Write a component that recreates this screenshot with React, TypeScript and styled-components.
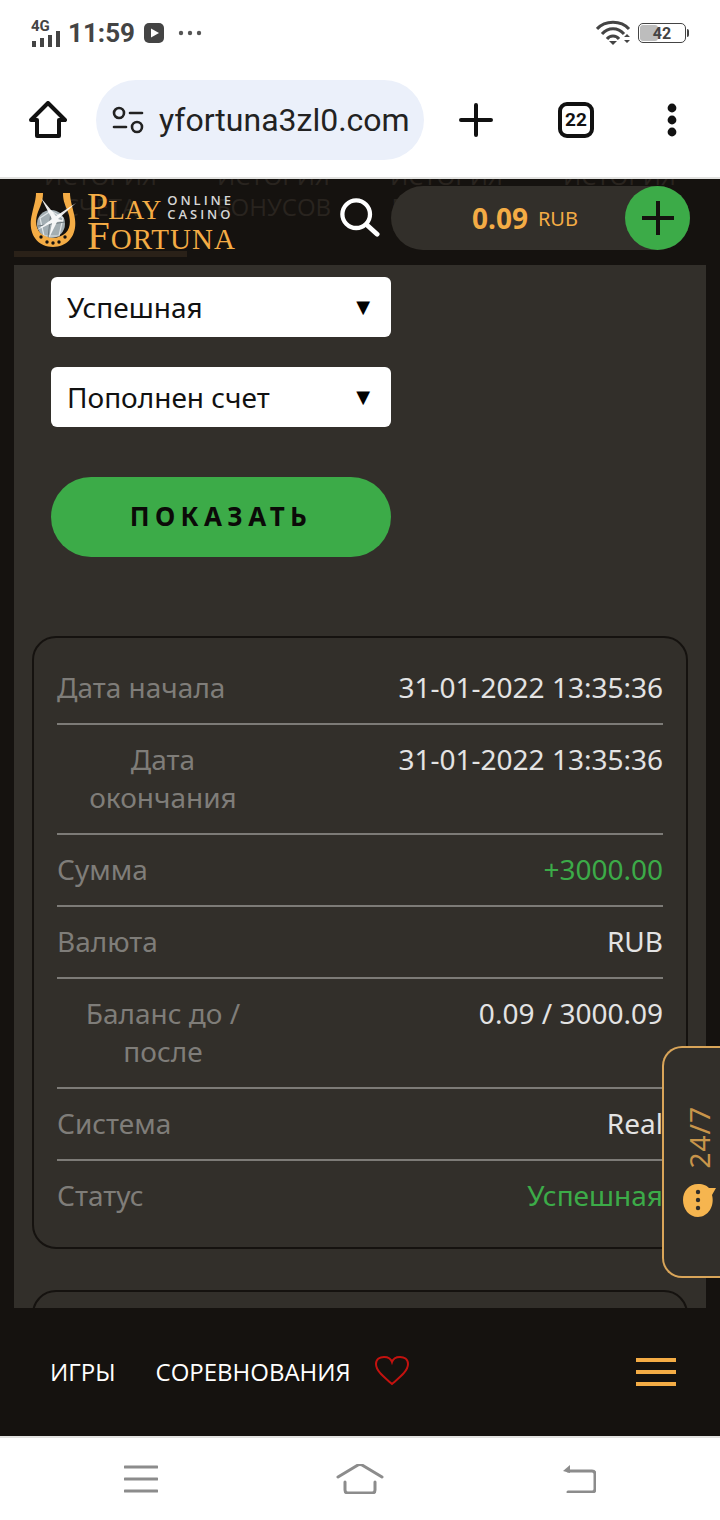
import * as React from 'react'
import styled, { createGlobalStyle } from 'styled-components'

const rows = [
  { label: 'Дата начала', value: '31-01-2022 13:35:36' },
  { label: 'Дата окончания', value: '31-01-2022 13:35:36', wrapped: true },
  { label: 'Сумма', value: '+3000.00', green: true },
  { label: 'Валюта', value: 'RUB' },
  { label: 'Баланс до / после', value: '0.09 / 3000.09', wrapped: true },
  { label: 'Система', value: 'Real' },
  { label: 'Статус', value: 'Успешная', green: true },
]

const tabs = [
  ['ИСТОРИЯ', 'СЧЕТА'],
  ['ИСТОРИЯ', 'БОНУСОВ'],
  ['ИСТОРИЯ', 'БАЛАНСА'],
  ['ИСТОРИЯ', 'ИГР'],
]

export default () => {
  return (
    <Screen>
      <GlobalStyle />
      <StatusBar>
        <StatusGroup>
          <SignalIcon />
          <Time>11:59</Time>
          <PlayIcon />
          <DotsIcon />
        </StatusGroup>
        <StatusGroup>
          <WifiIcon />
          <Battery>
            <BatteryFill />
            <BatteryText>42</BatteryText>
          </Battery>
          <BatteryTip />
        </StatusGroup>
      </StatusBar>

      <BrowserBar>
        <HomeIcon />
        <UrlPill>
          <TuneIcon />
          <UrlText>yfortuna3zl0.com</UrlText>
        </UrlPill>
        <PlusIcon />
        <TabCount>22</TabCount>
        <MoreIcon />
      </BrowserBar>

      <Page>
        <Header>
          <TabsBehind>
            {tabs.map((tab, i) => (
              <TabBehind key={i}>
                {tab[0]}
                <br />
                {tab[1]}
              </TabBehind>
            ))}
          </TabsBehind>
          <ActiveLine />
          <Logo>
            <HorseshoeIcon />
            <LogoWords>
              <LogoTop>
                <LogoName $size={38}>Play</LogoName>
                <LogoSmall>
                  ONLINE
                  <br />
                  CASINO
                </LogoSmall>
              </LogoTop>
              <LogoName $size={41} $spacing={1}>
                Fortuna
              </LogoName>
            </LogoWords>
          </Logo>
          <SearchIcon />
          <BalancePill>
            <BalanceAmount>0.09</BalanceAmount>
            <BalanceCurrency>RUB</BalanceCurrency>
            <AddButton>
              <AddIcon />
            </AddButton>
          </BalancePill>
        </Header>

        <Content>
          <Panel>
            <Filters>
              <Select>
                Успешная
                <SelectArrow>▼</SelectArrow>
              </Select>
              <Select>
                Пополнен счет
                <SelectArrow>▼</SelectArrow>
              </Select>
              <ShowButton>ПОКАЗАТЬ</ShowButton>
            </Filters>
            <Card>
              {rows.map((row) => (
                <Row key={row.label}>
                  <Label $wrapped={row.wrapped}>{row.label}</Label>
                  <Value $green={row.green}>{row.value}</Value>
                </Row>
              ))}
            </Card>
            <NextCard />
          </Panel>
          <SupportTab>
            <SupportText>24/7</SupportText>
            <BubbleIcon />
          </SupportTab>
        </Content>

        <BottomNav>
          <NavLink>ИГРЫ</NavLink>
          <NavLink>СОРЕВНОВАНИЯ</NavLink>
          <HeartIcon />
          <Burger>
            <BurgerBar />
            <BurgerBar />
            <BurgerBar />
          </Burger>
        </BottomNav>
      </Page>

      <SystemNav>
        <SysMenuIcon />
        <SysHomeIcon />
        <SysBackIcon />
      </SystemNav>
    </Screen>
  )
}

const SignalIcon = () => (
  <svg width="32" height="30" viewBox="0 0 32 30" style={{ marginRight: 6, flexShrink: 0 }}>
    <text x="1" y="13" fontFamily="Roboto" fontWeight="700" fontSize="15" fill="#444">
      4G
    </text>
    <rect x="2" y="23" width="4" height="6" fill="#444" />
    <rect x="10" y="20" width="4" height="9" fill="#444" />
    <rect x="18" y="17" width="4" height="12" fill="#444" />
    <rect x="26" y="13" width="4" height="16" fill="#444" />
  </svg>
)

const PlayIcon = () => (
  <svg width="20" height="20" viewBox="0 0 20 20" style={{ marginLeft: 9 }}>
    <rect width="20" height="20" rx="5" fill="#444" />
    <path d="M7 5.5 L15 10 L7 14.5 Z" fill="#fff" />
  </svg>
)

const DotsIcon = () => (
  <svg width="24" height="6" viewBox="0 0 24 6" style={{ marginLeft: 14 }}>
    <circle cx="3" cy="3" r="2.2" fill="#555" />
    <circle cx="12" cy="3" r="2.2" fill="#555" />
    <circle cx="21" cy="3" r="2.2" fill="#555" />
  </svg>
)

const WifiIcon = () => (
  <svg width="36" height="26" viewBox="0 0 36 26" style={{ marginRight: 6 }}>
    <g fill="none" stroke="#444" strokeWidth="3">
      <path d="M1 9 C9 0 25 0 33 9" />
      <path d="M6 14 C12 7 22 7 28 14" />
      <path d="M11 19 C14 15 20 15 23 19" />
    </g>
    <path d="M13 21 L21 21 L17 25 Z" fill="#444" />
    <path d="M28 17 L31 14 L34 17 Z M28 20 L34 20 L31 23 Z" fill="#444" />
  </svg>
)

const HomeIcon = () => (
  <svg width="38" height="38" viewBox="0 0 38 38">
    <path
      d="M2 19 L19 2 L36 19 L30 19 L30 35 L8 35 L8 19 Z"
      fill="none"
      stroke="#111"
      strokeWidth="4"
      strokeLinejoin="round"
    />
  </svg>
)

const TuneIcon = () => (
  <svg width="32" height="28" viewBox="0 0 32 28">
    <g fill="none" stroke="#222" strokeWidth="2.6" strokeLinecap="round">
      <circle cx="7" cy="7" r="5" />
      <path d="M18 7 H30" />
      <path d="M2 21 H14" />
      <circle cx="25" cy="21" r="5" />
    </g>
  </svg>
)

const PlusIcon = () => (
  <svg width="34" height="34" viewBox="0 0 34 34">
    <path d="M17 2 V32 M2 17 H32" stroke="#111" strokeWidth="4" strokeLinecap="round" />
  </svg>
)

const MoreIcon = () => (
  <svg width="12" height="34" viewBox="0 0 12 34">
    <circle cx="6" cy="5" r="4.4" fill="#111" />
    <circle cx="6" cy="17" r="4.4" fill="#111" />
    <circle cx="6" cy="29" r="4.4" fill="#111" />
  </svg>
)

const HorseshoeIcon = () => (
  <svg width="48" height="56" viewBox="0 0 48 56" style={{ flexShrink: 0 }}>
    <circle cx="22" cy="32" r="14" fill="#a3aeb3" />
    <path d="M11 26 L22 19 L34 26 L30 44 L15 44 Z" fill="none" stroke="#dfe4e6" strokeWidth="1.2" />
    <path d="M22 19 L19 46 M9 34 L36 30" stroke="#6d787d" strokeWidth="1" />
    <path
      d="M7 1 H14 C14 7 13 11 9 20 C4 34 9 45 24 46 C39 45 44 34 39 20 C35 11 34 7 34 1 H41 C41 7 43 13 45 22 C50 41 40 55 24 55 C8 55 -2 41 3 22 C5 13 7 7 7 1 Z"
      fill="#f4ac45"
    />
    <g fill="#15120f">
      <circle cx="12" cy="45" r="1.7" />
      <circle cx="18" cy="50" r="1.7" />
      <circle cx="24" cy="51" r="1.7" />
      <circle cx="30" cy="50" r="1.7" />
      <circle cx="36" cy="45" r="1.7" />
    </g>
    <path
      d="M12 6 L27 24 L47 11 L29 27 L35 29 L28 30 L20 46 L23 31 L8 38 L23 27 Z"
      fill="#fff"
      opacity="0.9"
    />
  </svg>
)

const SearchIcon = () => (
  <svg width="40" height="40" viewBox="0 0 42 42" style={{ flexShrink: 0, marginTop: 12 }}>
    <circle cx="17" cy="17" r="14.5" fill="none" stroke="#fff" strokeWidth="4.5" />
    <path d="M28 28 L39 38" stroke="#fff" strokeWidth="5" strokeLinecap="round" />
  </svg>
)

const AddIcon = () => (
  <svg width="32" height="34" viewBox="0 0 32 34">
    <path d="M16 0 V34 M0 17 H32" stroke="#15120f" strokeWidth="4" />
  </svg>
)

const BubbleIcon = () => (
  <svg width="33" height="33" viewBox="0 0 33 33" style={{ marginTop: 16, flexShrink: 0 }}>
    <path
      d="M15 0 C21 0 24 2 26 4 L33 4 L29 11 C32 22 25 33 15 33 C6 33 0 25 0 16 C0 7 6 0 15 0 Z"
      fill="#f6b54f"
    />
    <g fill="#322f2a">
      <circle cx="15" cy="8" r="2.2" />
      <circle cx="15" cy="16" r="2.2" />
      <circle cx="15" cy="24" r="2.2" />
    </g>
  </svg>
)

const HeartIcon = () => (
  <svg width="36" height="30" viewBox="0 0 36 30" style={{ marginLeft: -17 }}>
    <path
      d="M18 28 C10 21 2 15 2 8 C2 3 6 1 10 1 C14 1 17 3 18 6 C19 3 22 1 26 1 C30 1 34 3 34 8 C34 15 26 21 18 28 Z"
      fill="none"
      stroke="#c4120f"
      strokeWidth="2"
    />
  </svg>
)

const SysMenuIcon = () => (
  <svg width="34" height="28" viewBox="0 0 34 28">
    <path d="M1 2 H33 M1 14 H33 M1 26 H33" stroke="#8c8c8c" strokeWidth="3" strokeLinecap="round" />
  </svg>
)

const SysHomeIcon = () => (
  <svg width="48" height="30" viewBox="0 0 48 30">
    <path
      d="M2 13 L22 1 Q24 0 26 1 L46 13 M9 18 V26 Q9 29 12 29 H36 Q39 29 39 26 V18"
      fill="none"
      stroke="#8c8c8c"
      strokeWidth="3"
      strokeLinecap="round"
    />
  </svg>
)

const SysBackIcon = () => (
  <svg width="34" height="28" viewBox="0 0 34 28">
    <path
      d="M6 6 H30 Q33 6 33 9 V24 Q33 27 30 27 H6"
      fill="none"
      stroke="#8c8c8c"
      strokeWidth="3"
      strokeLinecap="round"
    />
    <path d="M8 0 V8 L1 6 Z" fill="#8c8c8c" />
  </svg>
)

const GlobalStyle = createGlobalStyle`
  html, body {
    margin: 0;
    padding: 0;
    background: #fff;
  }
`

const Screen = styled.div`
  display: flex;
  flex-direction: column;
  width: 720px;
  height: 1520px;
  overflow: hidden;
  background: #fff;
  font-family: 'Noto Sans', sans-serif;
`

const StatusBar = styled.div`
  display: flex;
  justify-content: space-between;
  align-items: center;
  height: 62px;
  padding: 4px 31px 0 30px;
  box-sizing: border-box;
`

const StatusGroup = styled.div`
  display: flex;
  align-items: center;
`

const Time = styled.span`
  font-family: Roboto, sans-serif;
  font-size: 26px;
  font-weight: 700;
  color: #444;
`

const Battery = styled.div`
  position: relative;
  width: 46px;
  height: 18px;
  border: 1.5px solid #444;
  border-radius: 5px;
  display: flex;
  align-items: center;
  justify-content: center;
  overflow: hidden;
`

const BatteryFill = styled.div`
  position: absolute;
  left: 1px;
  top: 1px;
  bottom: 1px;
  width: 40%;
  background: #bdbdbd;
  border-radius: 3px;
`

const BatteryText = styled.span`
  position: relative;
  font-family: Roboto, sans-serif;
  font-size: 16px;
  font-weight: 700;
  color: #444;
`

const BatteryTip = styled.div`
  width: 2px;
  height: 8px;
  margin-left: 1px;
  border-radius: 0 2px 2px 0;
  background: #444;
`

const BrowserBar = styled.div`
  display: flex;
  align-items: center;
  flex-shrink: 0;
  height: 117px;
  padding: 0 0 0 29px;
  box-sizing: border-box;
  border-bottom: 2px solid #e2e2e0;
`

const UrlPill = styled.div`
  display: flex;
  align-items: center;
  gap: 15px;
  width: 328px;
  height: 80px;
  margin: 0 35px 0 29px;
  padding-left: 16px;
  box-sizing: border-box;
  border-radius: 40px;
  background: #ebf0fa;
`

const UrlText = styled.span`
  font-family: Roboto, sans-serif;
  font-size: 32px;
  color: #222;
  white-space: nowrap;
`

const TabCount = styled.div`
  display: flex;
  align-items: center;
  justify-content: center;
  width: 36px;
  height: 36px;
  margin: 0 72px 0 65px;
  box-sizing: border-box;
  border: 4px solid #111;
  border-radius: 9px;
  font-family: Roboto, sans-serif;
  font-size: 19px;
  font-weight: 700;
  color: #111;
`

const Page = styled.div`
  display: flex;
  flex-direction: column;
  flex: 1;
  min-height: 0;
  background: #15120f;
`

const Header = styled.div`
  position: relative;
  display: flex;
  align-items: flex-start;
  flex-shrink: 0;
  height: 86px;
  padding: 7px 30px 0 29px;
  box-sizing: border-box;
  overflow: hidden;
  background: #15120f;
`

const TabsBehind = styled.div`
  position: absolute;
  left: 14px;
  top: -19px;
  display: grid;
  grid-template-columns: repeat(4, 173px);
`

const TabBehind = styled.div`
  font-family: 'Open Sans', sans-serif;
  font-size: 24px;
  line-height: 31px;
  text-align: center;
  color: #29241f;
`

const ActiveLine = styled.div`
  position: absolute;
  left: 14px;
  top: 72px;
  width: 173px;
  height: 6px;
  background: #2a2118;
`

const Logo = styled.div`
  position: relative;
  display: flex;
  align-items: flex-start;
  width: 311px;
  gap: 10px;
  flex-shrink: 0;
  padding-top: 6px;
  box-sizing: border-box;
`

const LogoWords = styled.div`
  display: flex;
  flex-direction: column;
`

const LogoTop = styled.div`
  display: flex;
  align-items: center;
  gap: 6px;
  height: 29px;
`

const LogoName = styled.div<{ $size: number; $spacing?: number }>`
  font-family: 'Liberation Serif', serif;
  font-variant: small-caps;
  font-size: ${(p) => p.$size}px;
  letter-spacing: ${(p) => p.$spacing || 0}px;
  line-height: 29px;
  color: #f4ac45;
`

const LogoSmall = styled.div`
  font-family: 'Open Sans', sans-serif;
  font-size: 13px;
  font-weight: 600;
  line-height: 14px;
  letter-spacing: 3px;
  color: #d6d6d6;
`

const BalancePill = styled.div`
  position: absolute;
  left: 391px;
  top: 7px;
  display: flex;
  align-items: center;
  justify-content: flex-start;
  width: 299px;
  height: 64px;
  padding-left: 81px;
  box-sizing: border-box;
  border-radius: 32px;
  background: #322f2a;
`

const BalanceAmount = styled.span`
  font-size: 28px;
  font-weight: 700;
  color: #f4ac45;
`

const BalanceCurrency = styled.span`
  margin-left: 10px;
  font-size: 20px;
  color: #f4ac45;
`

const AddButton = styled.div`
  display: flex;
  align-items: center;
  justify-content: center;
  width: 65px;
  height: 64px;
  margin-left: auto;
  border-radius: 50%;
  background: #3cab48;
`

const Content = styled.div`
  position: relative;
  flex: 1;
  min-height: 0;
  overflow: hidden;
`

const Panel = styled.div`
  margin: 0 14px;
  padding: 12px 18px 0;
  background: #322f2a;
`

const Filters = styled.div`
  display: flex;
  flex-direction: column;
  align-items: flex-start;
  padding-left: 19px;
`

const Select = styled.div`
  display: flex;
  align-items: center;
  justify-content: space-between;
  width: 340px;
  height: 60px;
  margin-bottom: 30px;
  padding: 0 18px 1px 16px;
  box-sizing: border-box;
  border-radius: 6px;
  background: #fff;
  font-size: 28px;
  color: #111;
`

const SelectArrow = styled.span`
  font-family: 'DejaVu Sans', sans-serif;
  font-size: 18px;
  margin-right: 3px;
  color: #000;
`

const ShowButton = styled.div`
  display: flex;
  align-items: center;
  justify-content: center;
  width: 340px;
  height: 80px;
  margin-top: 20px;
  padding-bottom: 2px;
  box-sizing: border-box;
  border-radius: 40px;
  background: #3cab48;
  font-size: 26px;
  font-weight: 700;
  letter-spacing: 5.4px;
  color: #0b0a08;
`

const Card = styled.div`
  margin-top: 79px;
  padding: 15px 23px 16px;
  border: 2px solid #15120f;
  border-radius: 24px;
`

const Row = styled.div`
  display: flex;
  justify-content: space-between;
  align-items: flex-start;
  padding: 15px 0 17px;
  border-bottom: 2px solid #7d7b77;
  font-size: 28px;
  line-height: 38px;

  &:last-child {
    border-bottom: none;
  }
`

const Label = styled.div<{ $wrapped?: boolean }>`
  width: ${(p) => (p.$wrapped ? '212px' : 'auto')};
  text-align: ${(p) => (p.$wrapped ? 'center' : 'left')};
  color: #7f7d79;
`

const Value = styled.div<{ $green?: boolean }>`
  text-align: right;
  white-space: nowrap;
  color: ${(p) => (p.$green ? '#3cab48' : '#e3e3e3')};
`

const NextCard = styled.div`
  height: 300px;
  margin-top: 41px;
  border: 2px solid #15120f;
  border-radius: 24px;
`

const SupportTab = styled.div`
  position: absolute;
  left: 662px;
  top: 781px;
  display: flex;
  flex-direction: column;
  align-items: center;
  width: 58px;
  height: 232px;
  padding: 58px 0 0 14px;
  box-sizing: border-box;
  border: 2px solid #d9a559;
  border-right: none;
  border-radius: 20px 0 0 20px;
  background: #322f2a;
`

const SupportText = styled.div`
  writing-mode: vertical-rl;
  transform: rotate(180deg);
  font-size: 28px;
  line-height: 30px;
  letter-spacing: 1px;
  color: #c8954a;
`

const BottomNav = styled.div`
  display: flex;
  align-items: center;
  flex-shrink: 0;
  gap: 40px;
  height: 128px;
  padding: 0 44px 2px 50px;
  box-sizing: border-box;
  background: #15120f;
`

const NavLink = styled.span`
  font-family: 'Open Sans', sans-serif;
  font-size: 24px;
  color: #fff;
`

const Burger = styled.div`
  display: flex;
  flex-direction: column;
  gap: 8px;
  width: 40px;
  margin: 2px 0 0 auto;
`

const BurgerBar = styled.div`
  height: 4px;
  background: #f4ac45;
`

const SystemNav = styled.div`
  display: flex;
  align-items: center;
  justify-content: space-between;
  flex-shrink: 0;
  height: 84px;
  padding: 0 124px 0 124px;
  box-sizing: border-box;
  border-top: 2px solid #e2e2e0;
`
